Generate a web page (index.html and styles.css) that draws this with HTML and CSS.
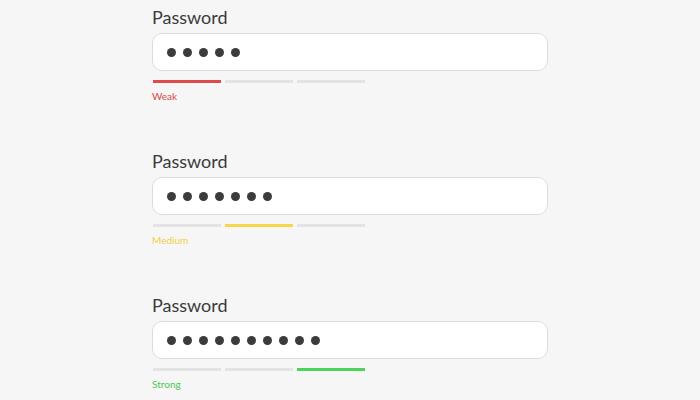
FILE: index.html
```html
<!DOCTYPE html>
<html lang="en">
<head>
    <meta charset="UTF-8">
    <meta name="viewport" content="width=device-width, initial-scale=1.0">
    <title>Password strength</title>
    <link rel="stylesheet" href="styles.css">
</head>
<body>
    <div class="container">
        <div class="field weak">
            <label class="field-label">Password</label>
            <div class="password-box">
                <span class="dot"></span><span class="dot"></span><span class="dot"></span><span class="dot"></span><span class="dot"></span>
            </div>
            <div class="meter">
                <span class="bar on"></span><span class="bar"></span><span class="bar"></span>
            </div>
            <div class="strength">Weak</div>
        </div>

        <div class="field medium">
            <label class="field-label">Password</label>
            <div class="password-box">
                <span class="dot"></span><span class="dot"></span><span class="dot"></span><span class="dot"></span><span class="dot"></span><span class="dot"></span><span class="dot"></span>
            </div>
            <div class="meter">
                <span class="bar"></span><span class="bar on"></span><span class="bar"></span>
            </div>
            <div class="strength">Medium</div>
        </div>

        <div class="field strong">
            <label class="field-label">Password</label>
            <div class="password-box">
                <span class="dot"></span><span class="dot"></span><span class="dot"></span><span class="dot"></span><span class="dot"></span><span class="dot"></span><span class="dot"></span><span class="dot"></span><span class="dot"></span><span class="dot"></span>
            </div>
            <div class="meter">
                <span class="bar"></span><span class="bar"></span><span class="bar on"></span>
            </div>
            <div class="strength">Strong</div>
        </div>
    </div>
</body>
</html>
```

FILE: styles.css
```css
body {
    background-color: #f6f6f6;
    color: #333;
    font-family: Lato, 'Open Sans', sans-serif;
    margin: 0;
    padding: 0;
}

.container {
    width: 396px;
    margin: 0 auto;
    padding-top: 6px;
    display: flex;
    flex-direction: column;
    gap: 48px;
}

.field {
    display: flex;
    flex-direction: column;
}

.field-label {
    font-size: 18px;
    line-height: 22px;
    color: #3a3a3a;
    margin-bottom: 5px;
}

.password-box {
    height: 36px;
    background-color: #fff;
    border: 1px solid #dcdcdc;
    border-radius: 10px;
    display: flex;
    align-items: center;
    gap: 7px;
    padding: 0 14px;
}

.dot {
    width: 9px;
    height: 9px;
    border-radius: 50%;
    background-color: #3b3b3b;
}

.meter {
    display: flex;
    gap: 4px;
    margin-top: 9px;
    padding-left: 1px;
}

.bar {
    width: 68px;
    height: 3px;
    background-color: #e3e3e3;
}

.strength {
    font-size: 10px;
    line-height: 12px;
    margin-top: 7px;
}

.weak .bar.on { background-color: #e04a4a; }
.weak .strength { color: #d84848; }

.medium .bar.on { background-color: #f7d64a; }
.medium .strength { color: #f2cf45; }

.strong .bar.on { background-color: #4cd45a; }
.strong .strength { color: #4cc754; }
```
